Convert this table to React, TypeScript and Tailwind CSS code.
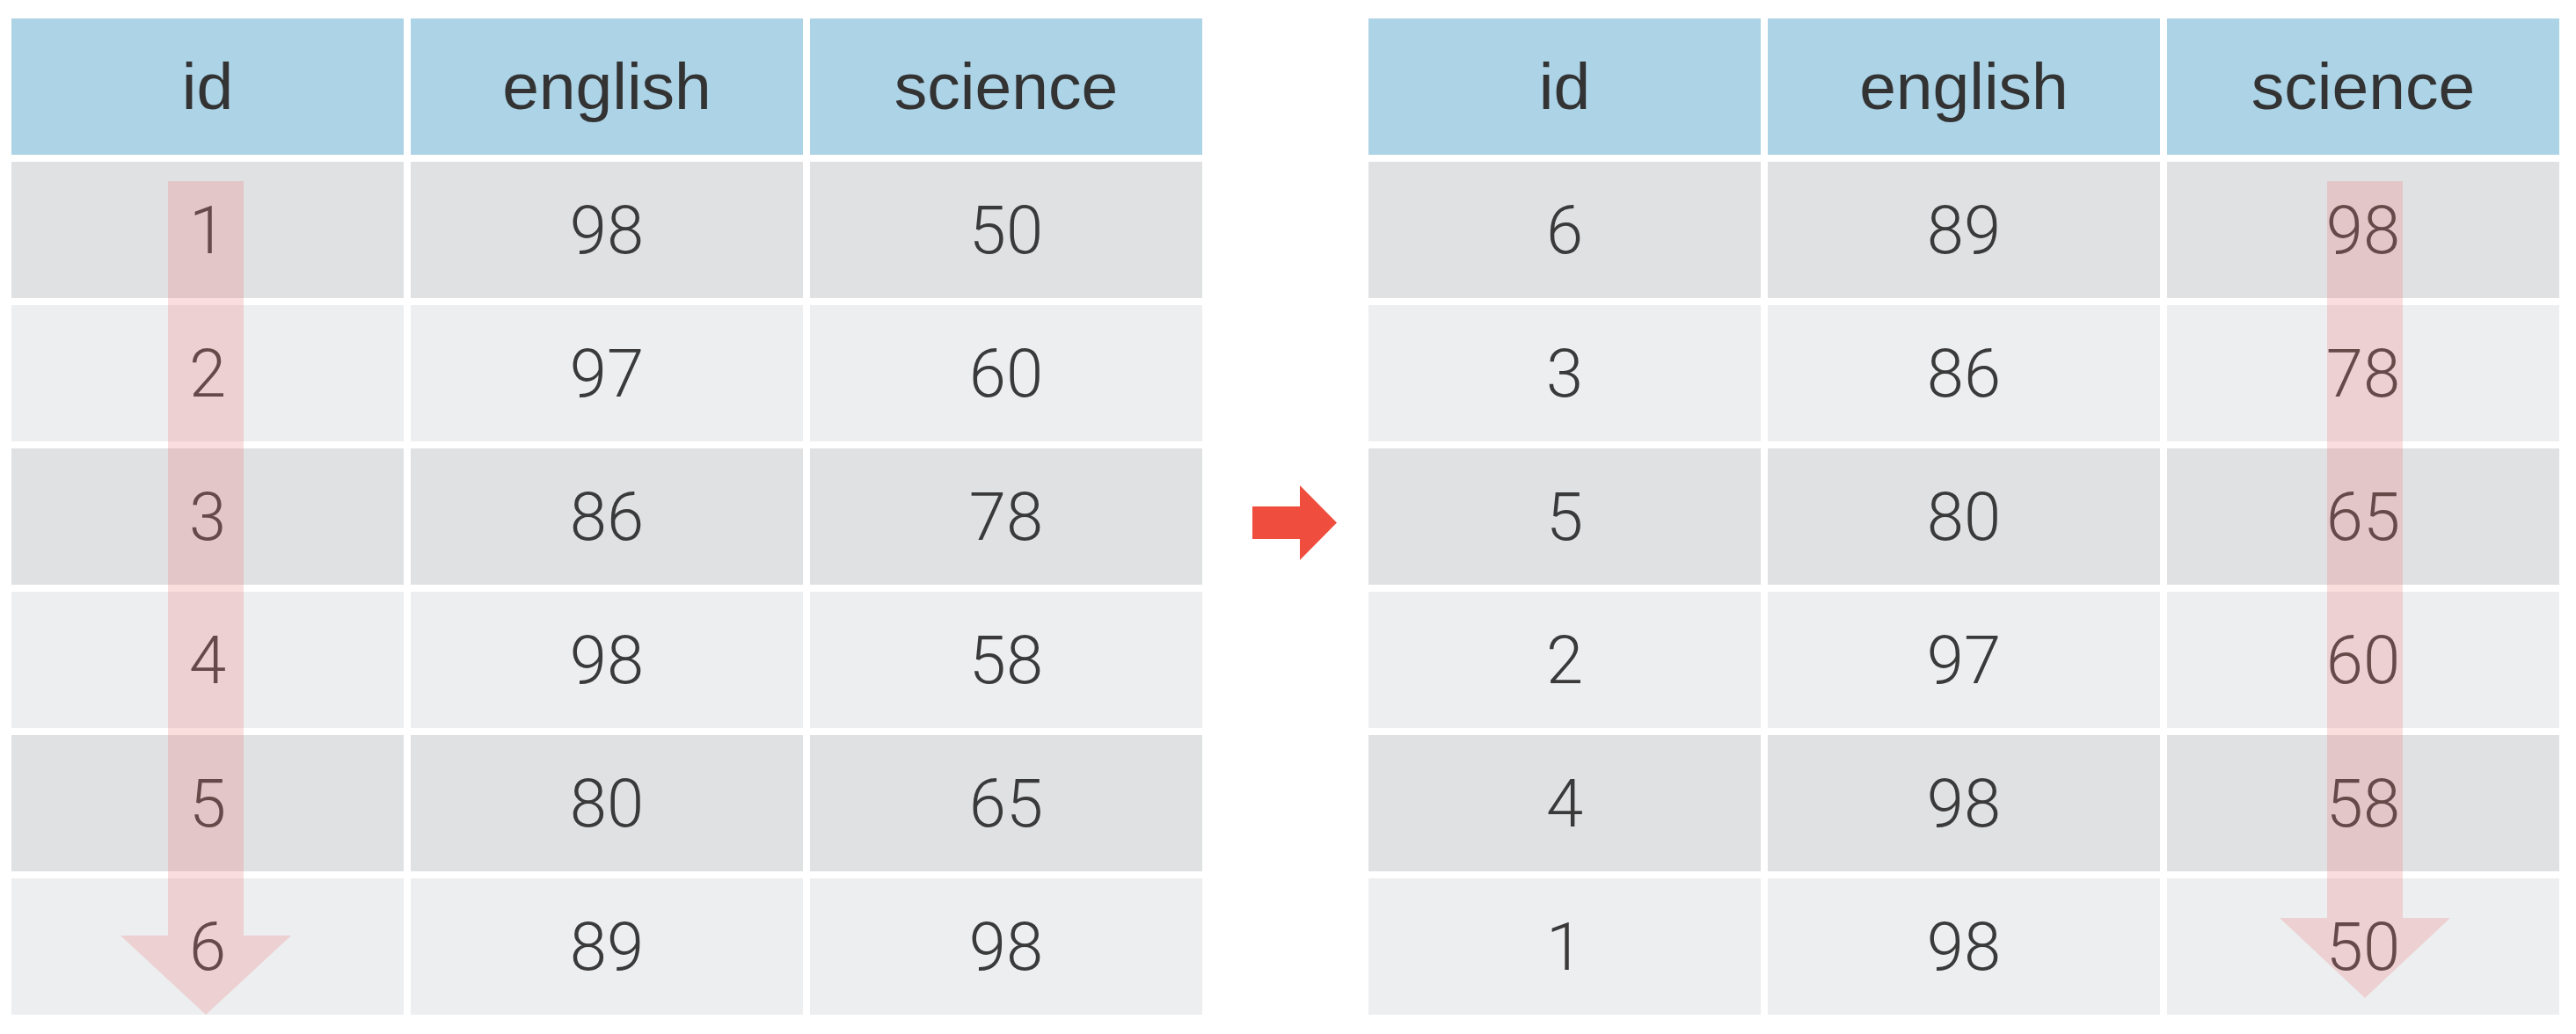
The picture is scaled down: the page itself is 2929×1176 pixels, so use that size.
import React from "react";

const headers = ["id", "english", "science"];
const leftRows = [
  ["1", "98", "50"],
  ["2", "97", "60"],
  ["3", "86", "78"],
  ["4", "98", "58"],
  ["5", "80", "65"],
  ["6", "89", "98"],
];
const rightRows = [
  ["6", "89", "98"],
  ["3", "86", "78"],
  ["5", "80", "65"],
  ["2", "97", "60"],
  ["4", "98", "58"],
  ["1", "98", "50"],
];

function DownArrow({ className, headTop, tip }: { className: string; headTop: number; tip: number }) {
  // width 194, shaft 86 centered (54..140), starts at y 0
  return (
    <svg
      className={className}
      width={194}
      height={tip}
      viewBox={`0 0 194 ${tip}`}
    >
      <polygon
        points={`54,0 140,0 140,${headTop} 194,${headTop} 97,${tip} 0,${headTop} 54,${headTop}`}
        fill="rgba(235,120,120,0.25)"
      />
    </svg>
  );
}

function Table({ rows, arrow }: { rows: string[][]; arrow: "left" | "right" }) {
  return (
    <div className="relative">
      <div className="grid grid-cols-[446px_446px_446px] gap-2">
        {headers.map((h) => (
          <div
            key={h}
            className="h-[155px] bg-[#acd3e6] flex items-center justify-center text-[75px] text-[#333333] font-['Liberation_Sans',Arial,sans-serif]"
          >
            {h}
          </div>
        ))}
        {rows.map((r, i) =>
          r.map((c, j) => (
            <div
              key={`${i}-${j}`}
              className={`h-[155px] flex items-center justify-center text-[76px] font-light text-[#3a3a3a] font-['Roboto','Liberation_Sans',sans-serif] ${
                i % 2 === 0 ? "bg-[#e0e1e3]" : "bg-[#edeef0]"
              }`}
            >
              {c}
            </div>
          ))
        )}
      </div>
      {arrow === "left" ? (
        <DownArrow className="absolute left-[124px] top-[185px]" headTop={858} tip={948} />
      ) : (
        <DownArrow className="absolute left-[1036px] top-[185px]" headTop={838} tip={929} />
      )}
    </div>
  );
}

export default function App() {
  return (
    <div className="w-[2929px] h-[1176px] bg-white pl-[13px] pt-[21px] flex items-start">
      <Table rows={leftRows} arrow="left" />
      <div className="w-[189px] h-[1133px] flex items-center justify-center">
        <svg className="mt-[14px] ml-[20px]" width={96} height={85} viewBox="0 0 96 85">
          <polygon points="0,24 54,24 54,0 96,42.5 54,85 54,61 0,61" fill="#ef4e3e" />
        </svg>
      </div>
      <Table rows={rightRows} arrow="right" />
    </div>
  );
}
